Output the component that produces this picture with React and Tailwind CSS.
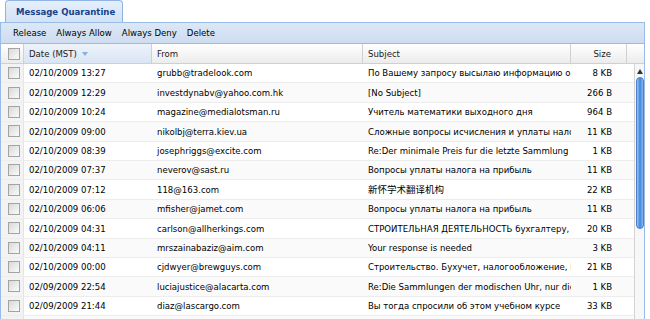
import React from "react";

const rows = [
  ["02/10/2009 13:27", "grubb@tradelook.com", "По Вашему запросу высылаю информацию о стоимости", "8 KB"],
  ["02/10/2009 12:29", "investdynabv@yahoo.com.hk", "[No Subject]", "266 B"],
  ["02/10/2009 10:24", "magazine@medialotsman.ru", "Учитель математики выходного дня", "964 B"],
  ["02/10/2009 09:00", "nikolbj@terra.kiev.ua", "Сложные вопросы исчисления и уплаты налогов", "11 KB"],
  ["02/10/2009 08:39", "josephriggs@excite.com", "Re:Der minimale Preis fur die letzte Sammlung der Uhren", "1 KB"],
  ["02/10/2009 07:37", "neverov@sast.ru", "Вопросы уплаты налога на прибыль", "11 KB"],
  ["02/10/2009 07:12", "118@163.com", "新怀学术翻译机构", "22 KB"],
  ["02/10/2009 06:06", "mfisher@jamet.com", "Вопросы уплаты налога на прибыль", "11 KB"],
  ["02/10/2009 04:31", "carlson@allherkings.com", "СТРОИТЕЛЬНАЯ ДЕЯТЕЛЬНОСТЬ бухгалтеру, кому", "20 KB"],
  ["02/10/2009 04:11", "mrszainabaziz@aim.com", "Your response is needed", "3 KB"],
  ["02/10/2009 00:00", "cjdwyer@brewguys.com", "Строительство. Бухучет, налогообложение, Контроль", "21 KB"],
  ["02/09/2009 22:54", "luciajustice@alacarta.com", "Re:Die Sammlungen der modischen Uhr, nur die besten", "1 KB"],
  ["02/09/2009 21:44", "diaz@lascargo.com", "Вы тогда спросили об этом учебном курсе", "33 KB"],
  ["02/09/2009 20:12", "info@example.com", "Re: ваш запрос", "4 KB"],
];

function Check() {
  return (
    <div className="w-[12px] h-[12px] border border-[#a3a3a3] bg-gradient-to-br from-[#d9d9d9] to-[#fbfbfb] shrink-0" />
  );
}

export default function App() {
  return (
    <div className="w-[650px] h-[319px] overflow-hidden bg-white text-black font-['DejaVu_Sans_Condensed','DejaVu_Sans','Noto_Sans_CJK_SC',sans-serif] text-[9.5px] leading-none">
      <div className="w-[645px]">
        {/* tab strip */}
        <div className="h-[23px] pl-[5px] flex items-end border-b border-[#99bbe8]">
          <div className="w-[118px] h-[22px] rounded-t-[4px] border border-b-0 border-[#8db2e3] bg-gradient-to-b from-[#e6effb] to-[#d2e2f6] flex items-center pl-[10px] font-bold text-[#15428b]">
            Message Quarantine
          </div>
        </div>
        {/* toolbar */}
        <div className="h-[21px] border-x border-b border-[#99bbe8] bg-gradient-to-b from-[#dce8f6] to-[#cddcef] flex items-center pl-[12px] gap-[10px]">
          <span>Release</span>
          <span>Always Allow</span>
          <span>Always Deny</span>
          <span>Delete</span>
        </div>
        {/* grid */}
        <div className="border-x border-[#99bbe8]">
          <div className="h-[20px] flex border-b border-[#d0d0d0] bg-gradient-to-b from-[#ffffff] to-[#ececec] text-[#222]">
            <div className="w-[23px] border-r border-[#d0d0d0] flex items-center pl-[7px]">
              <Check />
            </div>
            <div className="w-[128px] border-r border-[#d0d0d0] flex items-center pl-[5px] gap-[5px] bg-gradient-to-b from-[#eef3fa] to-[#d9e5f4]">
              <span>Date (MST)</span>
              <svg width="6" height="4" viewBox="0 0 6 4"><path d="M0 0h6L3 4z" fill="#8aaedb" /></svg>
            </div>
            <div className="w-[211px] border-r border-[#d0d0d0] flex items-center pl-[5px]">From</div>
            <div className="w-[208px] border-r border-[#d0d0d0] flex items-center pl-[5px]">Subject</div>
            <div className="w-[56px] border-r border-[#d0d0d0] flex items-center justify-end pr-[15px]">Size</div>
            <div className="flex-1" />
          </div>
          <div className="flex">
            <div className="flex-1 min-w-0">
              {rows.map((r, i) => (
                <div
                  key={i}
                  className={`h-[19.4px] flex border-b border-[#ededed] ${i % 2 ? "bg-[#fafafa]" : "bg-white"}`}
                >
                  <div className="w-[23px] bg-[#f3f3f3] border-r border-[#e4e4e4] flex items-center pl-[7px]">
                    <Check />
                  </div>
                  <div className="w-[128px] flex items-center pl-[5px] whitespace-nowrap overflow-hidden">{r[0]}</div>
                  <div className="w-[211px] flex items-center pl-[5px] whitespace-nowrap overflow-hidden">{r[1]}</div>
                  <div className="w-[208px] flex items-center pl-[5px] pr-[3px] whitespace-nowrap overflow-hidden">{r[2]}</div>
                  <div className="w-[56px] flex items-center justify-end pr-[15px] whitespace-nowrap">{r[3]}</div>
                </div>
              ))}
            </div>
            <div className="w-[10px] h-[260px] border-l border-[#d4d4d4] bg-[#f7f7f7] flex flex-col items-center">
              <svg className="mt-[5px]" width="6" height="5" viewBox="0 0 6 5"><path d="M0 5h6L3 0z" fill="#333" /></svg>
              <div className="mt-[3px] w-[8px] h-[152px] rounded-full bg-gradient-to-r from-[#9cc3f0] via-[#3d86e0] to-[#8cb8ee] border border-[#4a7fc4]" />
            </div>
          </div>
        </div>
      </div>
    </div>
  );
}
